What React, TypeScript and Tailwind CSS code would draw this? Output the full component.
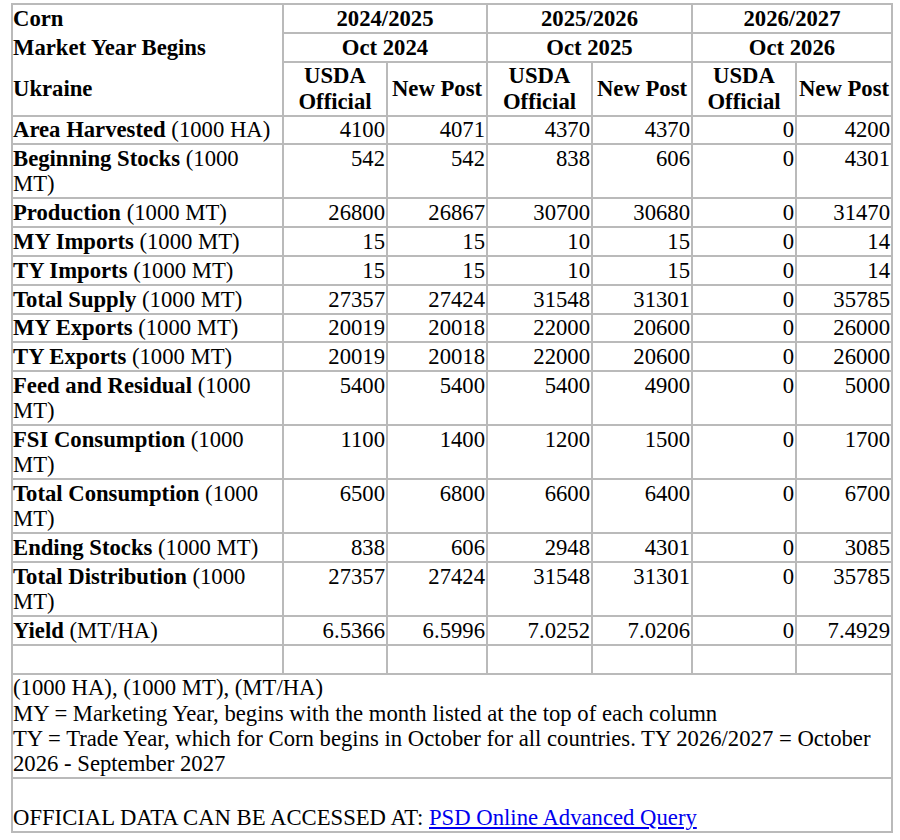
const cell = 'border border-[#bababa] px-px py-[0.8px]';

const rows: [string, string, string[]][] = [
  ['Area Harvested', '(1000 HA)', ['4100', '4071', '4370', '4370', '0', '4200']],
  ['Beginning Stocks', '(1000 MT)', ['542', '542', '838', '606', '0', '4301']],
  ['Production', '(1000 MT)', ['26800', '26867', '30700', '30680', '0', '31470']],
  ['MY Imports', '(1000 MT)', ['15', '15', '10', '15', '0', '14']],
  ['TY Imports', '(1000 MT)', ['15', '15', '10', '15', '0', '14']],
  ['Total Supply', '(1000 MT)', ['27357', '27424', '31548', '31301', '0', '35785']],
  ['MY Exports', '(1000 MT)', ['20019', '20018', '22000', '20600', '0', '26000']],
  ['TY Exports', '(1000 MT)', ['20019', '20018', '22000', '20600', '0', '26000']],
  ['Feed and Residual', '(1000 MT)', ['5400', '5400', '5400', '4900', '0', '5000']],
  ['FSI Consumption', '(1000 MT)', ['1100', '1400', '1200', '1500', '0', '1700']],
  ['Total Consumption', '(1000 MT)', ['6500', '6800', '6600', '6400', '0', '6700']],
  ['Ending Stocks', '(1000 MT)', ['838', '606', '2948', '4301', '0', '3085']],
  ['Total Distribution', '(1000 MT)', ['27357', '27424', '31548', '31301', '0', '35785']],
  ['Yield', '(MT/HA)', ['6.5366', '6.5996', '7.0252', '7.0206', '0', '7.4929']],
];

const years = [
  ['2024/2025', 'Oct 2024'],
  ['2025/2026', 'Oct 2025'],
  ['2026/2027', 'Oct 2026'],
];

export default function App() {
  return (
    <div className="min-h-screen bg-white pl-[11px] pt-[3px] text-black font-['Liberation_Serif','Times_New_Roman',serif] text-[22.7px] leading-[25.2px]">
      <table className="w-[882px] table-fixed border-separate border-spacing-0 border border-[#bababa]">
        <colgroup>
          <col className="w-[271px]" />
          <col className="w-[104px]" />
          <col className="w-[100px]" />
          <col className="w-[105px]" />
          <col className="w-[100px]" />
          <col className="w-[104px]" />
          <col className="w-[96px]" />
        </colgroup>
        <tbody>
          {/* header */}
          <tr>
            <td className={`${cell} border-b-0 pb-[1.8px] pl-0 text-left font-bold align-middle`}>Corn</td>
            {years.map(([y]) => (
              <td key={y} colSpan={2} className={`${cell} text-center font-bold align-middle`}>{y}</td>
            ))}
          </tr>
          <tr>
            <td className={`${cell} border-y-0 py-[1.8px] pl-0 text-left font-bold align-middle`}>Market Year Begins</td>
            {years.map(([y, m]) => (
              <td key={y} colSpan={2} className={`${cell} text-center font-bold align-middle`}>{m}</td>
            ))}
          </tr>
          <tr>
            <td className={`${cell} border-t-0 pt-[1.8px] pl-0 text-left font-bold align-middle`}>Ukraine</td>
            {years.map(([y]) => [
              <td key={y + 'a'} className={`${cell} text-center font-bold align-middle`}>USDA<br />Official</td>,
              <td key={y + 'b'} className={`${cell} text-center font-bold align-middle`}>New Post</td>,
            ])}
          </tr>

          {/* data */}
          {rows.map(([label, unit, vals]) => (
            <tr key={label}>
              <td className={`${cell} pl-0 text-left align-top`}>
                <b>{label}</b> {unit}
              </td>
              {vals.map((v, i) => (
                <td key={i} className={`${cell} text-right align-top`}>{v}</td>
              ))}
            </tr>
          ))}
          <tr>
            <td className={cell}>&nbsp;</td>
            {[0, 1, 2, 3, 4, 5].map((i) => (
              <td key={i} className={cell}>&nbsp;</td>
            ))}
          </tr>

          {/* notes */}
          <tr>
            <td colSpan={7} className={`${cell} pl-0 text-left align-top`}>
              (1000 HA), (1000 MT), (MT/HA)<br />
              MY = Marketing Year, begins with the month listed at the top of each column<br />
              TY = Trade Year, which for Corn begins in October for all countries. TY 2026/2027 = October 2026 - September 2027
            </td>
          </tr>
          <tr>
            <td colSpan={7} className={`${cell} pl-0 text-left align-top`}>
              <br />
              OFFICIAL DATA CAN BE ACCESSED AT:{' '}
              <a href="#" className="text-[#0000ee] underline">PSD Online Advanced Query</a>
            </td>
          </tr>
        </tbody>
      </table>
    </div>
  );
}
